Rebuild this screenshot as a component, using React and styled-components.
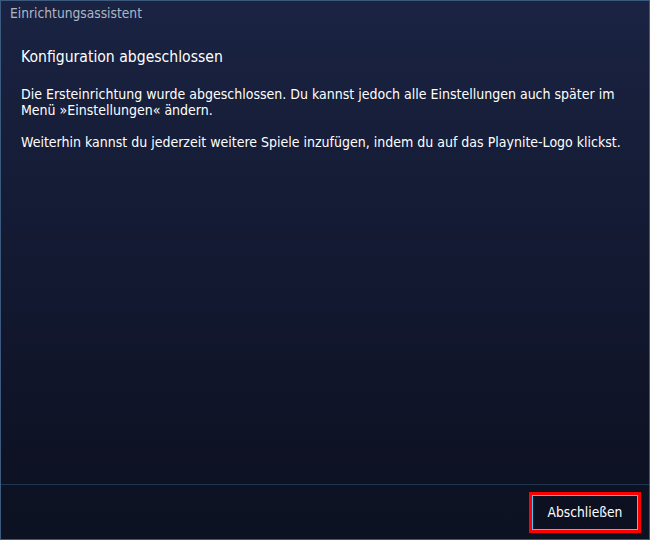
import React from "react"
import styled, { createGlobalStyle } from "styled-components"

const Global = createGlobalStyle`
  html, body {
    margin: 0;
    padding: 0;
    background: #0e1224;
  }
`

const Window = styled.div`
  box-sizing: border-box;
  width: 650px;
  height: 540px;
  border: 1px solid #3b5a7e;
  background: linear-gradient(to bottom, #1a2342 0%, #141b34 40%, #0e1224 85%, #0d1223 100%);
  display: flex;
  flex-direction: column;
  font-family: "DejaVu Sans Condensed", "DejaVu Sans", sans-serif;
  color: #ffffff;
`

const TitleBar = styled.div`
  height: 24px;
  padding: 4px 0 0 9px;
  box-sizing: border-box;
  font-size: 13.7px;
  color: #aeb6c6;
`

const Content = styled.div`
  flex: 1;
  padding: 22px 20px 0 20px;
`

const Heading = styled.h1`
  margin: 0 0 19px 0;
  font-size: 15.6px;
  font-weight: normal;
  line-height: 20px;
`

const Paragraph = styled.p`
  margin: 0 0 16px 0;
  font-size: 14px;
  line-height: 16px;
  max-width: 610px;
`

const Footer = styled.div`
  border-top: 1px solid #1f3552;
  height: 55px;
  box-sizing: border-box;
  display: flex;
  justify-content: flex-end;
  align-items: center;
  padding-right: 11px;
`

const Button = styled.button`
  box-sizing: border-box;
  width: 106px;
  height: 35px;
  background: #0c1020;
  border: 1px solid #4fc3f7;
  outline: 3px solid #ff0000;
  outline-offset: 0;
  color: #ffffff;
  font-family: inherit;
  font-size: 13.7px;
  padding: 0;
`

const App = () => (
  <>
    <Global />
    <Window>
      <TitleBar>Einrichtungsassistent</TitleBar>
      <Content>
        <Heading>Konfiguration abgeschlossen</Heading>
        <Paragraph>
          Die Ersteinrichtung wurde abgeschlossen. Du kannst jedoch alle Einstellungen auch später im Menü »Einstellungen« ändern.
        </Paragraph>
        <Paragraph>
          Weiterhin kannst du jederzeit weitere Spiele inzufügen, indem du auf das Playnite-Logo klickst.
        </Paragraph>
      </Content>
      <Footer>
        <Button>Abschließen</Button>
      </Footer>
    </Window>
  </>
)

export default App
